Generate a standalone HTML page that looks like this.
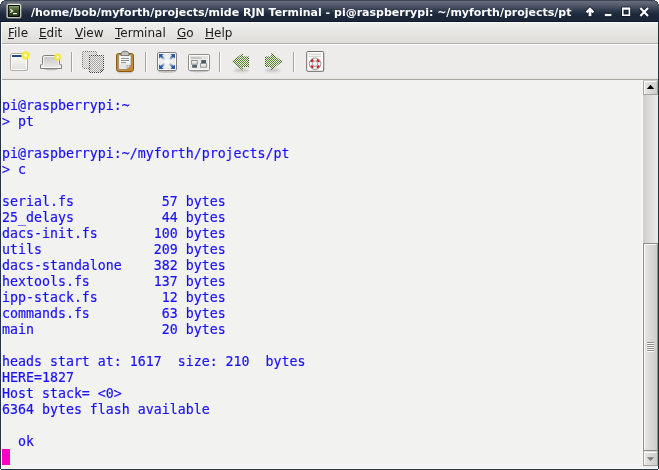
<!DOCTYPE html>
<html><head><meta charset="utf-8">
<style>
html,body{margin:0;padding:0;}
body{width:659px;height:470px;overflow:hidden;background:#fff;position:relative;font-family:"DejaVu Sans","Liberation Sans",sans-serif;}
#win{position:absolute;left:0;top:0;width:659px;height:470px;background:#243247;overflow:hidden;}
#title{position:absolute;left:0;top:0;width:659px;height:22px;background:linear-gradient(#3b4553 0,#3b4553 1px,#646c7b 1px,#5f6776 3px,#525b6b 5px,#454f60 7px,#384355 9px,#2c384b 11px,#222e42 13px,#1c283b 15px,#1b2639 21px,#0f1a2e 21px,#0f1a2e 22px);}
#ttext{position:absolute;left:31px;top:6px;will-change:transform;font-weight:bold;font-size:11px;line-height:14px;color:#fff;white-space:nowrap;letter-spacing:0px}
#client{position:absolute;left:1px;top:22px;width:657px;height:447px;background:#edecea;border-left:1px solid #fbfbfa;border-bottom:1px solid #fbfbfa;box-sizing:border-box}
#menubar{position:absolute;left:0;top:0;width:656px;height:22px;background:linear-gradient(#efefed,#dddcd8);border-top:1px solid #fcfcfb;border-bottom:1px solid #b0aea7;box-sizing:border-box;}
.mi{will-change:transform;position:absolute;top:2px;font-size:12px;line-height:16px;color:#1a1a1a;white-space:nowrap}
.mi u{text-decoration:underline;text-underline-offset:1px}
#toolbar{position:absolute;left:0;top:22px;width:656px;height:35px;background:linear-gradient(#edecea 0,#edecea 32px,#e3e2df 35px);border-top:1px solid #fcfcfb;box-sizing:border-box}
#term{position:absolute;left:0;top:57px;width:641px;height:389px;background:#f2f2f0;border-top:1px solid #a6a49e;border-right:1px solid #fbfbfa;box-sizing:border-box;}
pre{will-change:transform;margin:0;position:absolute;left:0px;top:2px;font-family:"DejaVu Sans Mono","Liberation Mono",monospace;font-size:13.288px;line-height:16px;color:#1a10fa;-webkit-text-stroke:0.18px #1a10fa;}
#cursor{position:absolute;left:0;top:369px;width:8px;height:16px;background:#ff00c8}
#ov{position:absolute;left:0;top:0;width:659px;height:470px;}
</style></head><body>
<div id="win">
<div id="title"><div id="ttext">/home/bob/myforth/projects/mide RJN Terminal - pi@raspberrypi: ~/myforth/projects/pt</div></div>
<div id="client">
<div id="menubar">
<span class="mi" style="left:6px"><u>F</u>ile</span>
<span class="mi" style="left:37px"><u>E</u>dit</span>
<span class="mi" style="left:73px"><u>V</u>iew</span>
<span class="mi" style="left:113px"><u>T</u>erminal</span>
<span class="mi" style="left:175px"><u>G</u>o</span>
<span class="mi" style="left:203px"><u>H</u>elp</span>
</div>
<div id="toolbar"></div>
<div id="term"><pre>

pi@raspberrypi:~
&gt; pt

pi@raspberrypi:~/myforth/projects/pt
&gt; c

serial.fs           57 bytes
25_delays           44 bytes
dacs-init.fs       100 bytes
utils              209 bytes
dacs-standalone    382 bytes
hextools.fs        137 bytes
ipp-stack.fs        12 bytes
commands.fs         63 bytes
main                20 bytes

heads start at: 1617  size: 210  bytes
HERE=1827
Host stack= &lt;0&gt;
6364 bytes flash available

  ok
</pre><div id="cursor"></div></div>
</div>
<svg id="ov" width="659" height="470" viewBox="0 0 659 470">
<defs>
<pattern id="st1" width="2" height="2" patternUnits="userSpaceOnUse"><rect x="0" y="0" width="1" height="1" fill="#fff"/><rect x="1" y="1" width="1" height="1" fill="#fff"/></pattern>
<mask id="stm" maskUnits="userSpaceOnUse" x="0" y="0" width="659" height="470"><rect x="0" y="0" width="659" height="470" fill="url(#st1)" shape-rendering="crispEdges"/></mask>
<linearGradient id="gIcon" x1="0" y1="0" x2="0" y2="1"><stop offset="0" stop-color="#88a46c"/><stop offset="0.2" stop-color="#5f7b45"/><stop offset="0.5" stop-color="#3c5028"/><stop offset="1" stop-color="#243218"/></linearGradient>
<linearGradient id="gFrame" x1="0" y1="0" x2="0" y2="1"><stop offset="0" stop-color="#ecece4"/><stop offset="1" stop-color="#c4c4ba"/></linearGradient>
<linearGradient id="gWin" x1="0" y1="0" x2="0" y2="1"><stop offset="0" stop-color="#ffffff"/><stop offset="1" stop-color="#dededc"/></linearGradient>
<linearGradient id="gTab" x1="0" y1="0" x2="0" y2="1"><stop offset="0" stop-color="#c4c4c2"/><stop offset="1" stop-color="#ebebe9"/></linearGradient>
<radialGradient id="gGlow"><stop offset="0" stop-color="#ffffff"/><stop offset="0.12" stop-color="#ffffff"/><stop offset="0.3" stop-color="#f7f06a"/><stop offset="0.55" stop-color="#f2e832"/><stop offset="0.78" stop-color="#f2e83a" stop-opacity="0.75"/><stop offset="1" stop-color="#f2e83a" stop-opacity="0"/></radialGradient>
<linearGradient id="gTrough" x1="0" y1="0" x2="1" y2="0"><stop offset="0" stop-color="#cfcecb"/><stop offset="1" stop-color="#ecebe9"/></linearGradient>
<linearGradient id="gThumb" x1="0" y1="0" x2="1" y2="0"><stop offset="0" stop-color="#e9e8e6"/><stop offset="1" stop-color="#cccbc8"/></linearGradient>
<linearGradient id="gBtn" x1="0" y1="0" x2="0" y2="1"><stop offset="0" stop-color="#f4f4f2"/><stop offset="1" stop-color="#dddcd9"/></linearGradient>
<radialGradient id="gFs" cx="0.5" cy="0.5" r="0.7"><stop offset="0" stop-color="#fafafa"/><stop offset="1" stop-color="#dcdcda"/></radialGradient>
<linearGradient id="gA1" gradientUnits="userSpaceOnUse" x1="160.600" y1="55.600" x2="165.600" y2="60.600"><stop offset="0.15" stop-color="#2a5aa8"/><stop offset="0.85" stop-color="#2a5aa8" stop-opacity="0"/></linearGradient>
<linearGradient id="gA2" gradientUnits="userSpaceOnUse" x1="173.400" y1="55.600" x2="168.400" y2="60.600"><stop offset="0.15" stop-color="#2a5aa8"/><stop offset="0.85" stop-color="#2a5aa8" stop-opacity="0"/></linearGradient>
<linearGradient id="gA3" gradientUnits="userSpaceOnUse" x1="160.600" y1="67.400" x2="165.600" y2="62.400"><stop offset="0.15" stop-color="#2a5aa8"/><stop offset="0.85" stop-color="#2a5aa8" stop-opacity="0"/></linearGradient>
<linearGradient id="gA4" gradientUnits="userSpaceOnUse" x1="173.400" y1="67.400" x2="168.400" y2="62.400"><stop offset="0.15" stop-color="#2a5aa8"/><stop offset="0.85" stop-color="#2a5aa8" stop-opacity="0"/></linearGradient>
<filter id="blur1" x="-20%" y="-100%" width="140%" height="300%"><feGaussianBlur stdDeviation="0.9"/></filter>
<linearGradient id="gWin2" x1="0" y1="0" x2="0" y2="1"><stop offset="0" stop-color="#ffffff"/><stop offset="1" stop-color="#ecece9"/></linearGradient>
</defs>
<!-- title icon -->
<rect x="6.200" y="3.300" width="15.300" height="15.300" rx="2.600" fill="#9c9c92"/>
<rect x="6.900" y="4" width="13.900" height="13.900" rx="2" fill="url(#gFrame)"/>
<rect x="7.8" y="5" width="12.2" height="12" rx="1" fill="#050805"/>
<rect x="8.8" y="6" width="10.2" height="10" fill="url(#gIcon)"/>
<path d="M10.3 9.2 L12.6 10.9 L10.3 12.6" fill="none" stroke="#fff" stroke-width="1.1"/>
<rect x="13" y="13" width="4" height="1.2" fill="#fff"/>
<!-- title buttons -->
<g fill="none" stroke="#0a1220" opacity="0.75">
<path d="M590 16.100 V9.500" stroke-width="4.6"/>
<path d="M586.500 12.400 L590 8.900 L593.500 12.400" stroke-width="4.0" stroke-linejoin="miter"/>
<path d="M604.800 15 H611.400" stroke-width="4.1"/>
<rect x="622.800" y="8.800" width="6.600" height="6.400" stroke-width="3.4"/>
<path d="M622 8.400 H630.200" stroke-width="3.7"/>
<path d="M640.400 8 L648 15.900 M648 8 L640.400 15.900" stroke-width="4.0"/>
</g>
<g fill="none" stroke="#fff">
<path d="M590 16.100 V9.500" stroke-width="2.8"/>
<path d="M586.500 12.400 L590 8.900 L593.500 12.400" stroke-width="2.2" stroke-linejoin="miter"/>
<path d="M604.800 15 H611.400" stroke-width="2.3"/>
<rect x="622.800" y="8.800" width="6.600" height="6.400" stroke-width="1.6"/>
<path d="M622 8.400 H630.200" stroke-width="1.9"/>
<path d="M640.400 8 L648 15.900 M648 8 L640.400 15.900" stroke-width="2.2"/>
</g>
<!-- toolbar separators -->
<g fill="#a5a49e"><rect x="71" y="52" width="1" height="20"/><rect x="145" y="52" width="1" height="20"/><rect x="219" y="52" width="1" height="20"/><rect x="293" y="52" width="1" height="20"/></g>
<g fill="#fbfbfa"><rect x="72" y="52" width="1" height="20"/><rect x="146" y="52" width="1" height="20"/><rect x="220" y="52" width="1" height="20"/><rect x="294" y="52" width="1" height="20"/></g>
<!-- new window -->
<rect x="10.500" y="53.500" width="17" height="17" rx="1.500" fill="url(#gWin)" stroke="#adada6"/>
<rect x="11.500" y="54.500" width="15" height="15" rx="0.700" fill="none" stroke="#fff" stroke-width="0.900"/>
<rect x="12" y="55" width="10" height="2" fill="#204a87"/>
<circle cx="25.600" cy="55.400" r="5" fill="url(#gGlow)"/>
<!-- new tab -->
<ellipse cx="51" cy="69.500" rx="7" ry="0.800" fill="#8a8a86" opacity="0.500"/>
<path d="M40.500 68.500 V64.800 H41.800 Q42.500 64.800 42.500 63.800 V57.500 Q42.500 55.500 44.500 55.500 H57.500 Q59.500 55.500 59.500 57.500 V63.800 Q59.500 64.800 60.300 64.800 H61.500 V68.500 Z" fill="url(#gTab)" stroke="#807f7b"/>
<path d="M41.500 67.500 V65.800 H42.600 Q43.500 65.800 43.500 64.600 V57.700 Q43.500 56.500 44.700 56.500 H57.300 Q58.500 56.500 58.500 57.700 V64.600 Q58.500 65.800 59.400 65.800 H60.500 V67.500 Z" fill="none" stroke="#fff" stroke-width="0.900" opacity="0.850"/>
<circle cx="57.700" cy="57.100" r="4.300" fill="url(#gGlow)"/>
<!-- copy (disabled, stippled) -->
<g mask="url(#stm)">
<rect x="82.500" y="51.500" width="14" height="17" rx="1.2" fill="#c2c2c0" stroke="#6e6e6c"/>
<path d="M89.500 55.500 H103.500 V69.500 L100.500 72.500 H89.500 Z" fill="#a6a6a4" stroke="#3a3a3a"/>
<path d="M100.500 72 V69.500 H103.500" fill="none" stroke="#5a5a5a"/>
</g>
<!-- paste -->
<ellipse cx="125" cy="72.600" rx="8" ry="0.900" fill="#8a8a86" opacity="0.350"/>
<rect x="116.500" y="53.500" width="17" height="18" rx="2.200" fill="#c78a2c" stroke="#8a5a08"/>
<path d="M118.700 54.700 H131 V65.500 L127 69.300 H118.700 Z" fill="#fbfbfa" stroke="#7e7e7a" stroke-width="0.700"/>
<path d="M120 63.500 H130.300 V65.300 L126.800 68.600 H120 Z" fill="#e4e4e0"/>
<path d="M127 69.200 Q127.600 66.300 126.600 65.600 Q129 66.300 131 65.500 Z" fill="#f6f6f4" stroke="#7e7e7a" stroke-width="0.600"/>
<g stroke="#8c8c8a" stroke-width="1"><path d="M121 58.400 H129"/><path d="M121 60.500 H129"/><path d="M121 62.600 H126"/></g>
<path d="M120.900 55.600 V53.900 Q120.900 53 121.800 52.600 Q122.300 51.300 123.600 51.300 H126.400 Q127.700 51.300 128.200 52.600 Q129.100 53 129.100 53.900 V55.600 Z" fill="#b9bab0" stroke="#5c5e58" stroke-width="0.800"/>
<path d="M122 54 H128" stroke="#d6d6ce" stroke-width="0.900"/>
<!-- fullscreen -->
<ellipse cx="167" cy="71.600" rx="9" ry="1.100" fill="#8a8a86" opacity="0.450"/>
<rect x="157.500" y="52.500" width="19" height="18" rx="1.500" fill="url(#gFs)" stroke="#7e7e7b"/>
<rect x="158.500" y="53.500" width="17" height="16" rx="0.800" fill="none" stroke="#fff" stroke-width="0.800"/>
<g stroke-width="2.300" fill="none">
<path d="M160.600 55.600 L165.600 60.600" stroke="url(#gA1)"/>
<path d="M173.400 55.600 L168.400 60.600" stroke="url(#gA2)"/>
<path d="M160.600 67.400 L165.600 62.400" stroke="url(#gA3)"/>
<path d="M173.400 67.400 L168.400 62.400" stroke="url(#gA4)"/>
</g>
<g fill="#2a5aa8">
<path d="M159 54 H163.600 L159 58.600 Z"/>
<path d="M175 54 H170.400 L175 58.600 Z"/>
<path d="M159 69 H163.600 L159 64.400 Z"/>
<path d="M175 69 H170.400 L175 64.400 Z"/>
</g>
<!-- tabs icon -->
<ellipse cx="199" cy="71.400" rx="9" ry="0.900" fill="#8a8a86" opacity="0.400"/>
<rect x="188.500" y="54.500" width="21" height="16" rx="1.200" fill="#ececea" stroke="#8c8c89"/>
<rect x="189.500" y="55.500" width="19" height="14" rx="0.500" fill="none" stroke="#fcfcfc" stroke-width="0.900"/>
<rect x="190.200" y="56.200" width="17.600" height="3" fill="#e2e2e0"/>
<rect x="190.700" y="57" width="10.500" height="1.800" fill="#c2c2c0"/>
<rect x="191.650" y="60.600" width="5.600" height="3.500" fill="#fff" stroke="#8a8a88" stroke-width="1"/>
<path d="M193.300 62.400 H195.800" stroke="#c8c8c6" stroke-width="0.700"/>
<rect x="192.200" y="64.900" width="4.750" height="2.850" fill="#4e6066"/>
<rect x="201.200" y="60.100" width="4.800" height="2.900" fill="#4a5a60"/>
<rect x="200.650" y="63.600" width="5.700" height="3.500" fill="#fff" stroke="#8a8a88" stroke-width="1"/>
<path d="M202.300 65.400 H204.800" stroke="#c8c8c6" stroke-width="0.700"/>
<!-- back / forward (disabled, stippled) -->
<g filter="url(#blur1)" opacity="0.42"><ellipse cx="241.500" cy="70.300" rx="7.500" ry="1.800" fill="#8e8e8a"/><ellipse cx="272.500" cy="70.300" rx="7.500" ry="1.800" fill="#8e8e8a"/></g>
<g mask="url(#stm)">
<path d="M231.800 61.600 L242.800 52.900 V56.600 H249 V67 H242.800 V70.500 Z" fill="#335a10"/>
<path d="M233.400 61.600 L241.800 55 V57.600 H248 V66 H241.800 V68.400 Z" fill="#568628"/>
<path d="M282.300 61.600 L271.200 52.900 V56.600 H265 V67 H271.200 V70.500 Z" fill="#335a10"/>
<path d="M280.700 61.600 L272.200 55 V57.600 H266 V66 H272.200 V68.400 Z" fill="#568628"/>
</g>
<!-- help -->
<rect x="307.300" y="52.300" width="17" height="19.800" rx="1.2" fill="#8a8a86" opacity="0.35"/>
<rect x="306.700" y="51.500" width="17" height="19.800" rx="1.2" fill="#fdfdfc" stroke="#6e6e6a"/>
<path d="M308.700 54.2 H321 M308.700 56.300 H321" stroke="#c6c6c2" stroke-width="0.9"/>
<circle cx="315.100" cy="63.700" r="4.300" fill="none" stroke="#fbfbfb" stroke-width="3"/>
<g fill="none" stroke="#cf1f28" stroke-width="2.500">
<path d="M316.900 59.780 A4.300 4.300 0 0 1 319.020 61.900"/>
<path d="M319.020 65.500 A4.300 4.300 0 0 1 316.900 67.620"/>
<path d="M313.300 67.620 A4.300 4.300 0 0 1 311.180 65.500"/>
<path d="M311.180 61.900 A4.300 4.300 0 0 1 313.300 59.780"/>
</g>
<circle cx="315.100" cy="63.700" r="5.800" fill="none" stroke="#8a8a86" stroke-width="0.900"/>
<circle cx="315.100" cy="63.700" r="2.700" fill="#f4f4f2" stroke="#8a8a86" stroke-width="0.800"/>
<!-- scrollbar -->
<rect x="643" y="80" width="15" height="389" fill="url(#gTrough)"/>
<rect x="643.500" y="80.500" width="14" height="14" fill="url(#gThumb)" stroke="#a3a19c"/>
<path d="M643 80.500 H658" stroke="#cdcbc6"/>
<path d="M642 79.500 H658" stroke="#a6a49e"/>
<path d="M644.500 93.500 V81.500 H656.500" fill="none" stroke="#fff"/>
<path d="M646.800 89 L650.500 84.800 L654.200 89 Z" fill="#000"/>
<rect x="643.500" y="243.500" width="14" height="207" fill="url(#gThumb)" stroke="#8f8d89"/>
<path d="M644.500 450 V244.500 H656.500" fill="none" stroke="#fbfbfa"/>
<g shape-rendering="crispEdges"><path d="M647 342.500 H654 M647 344.500 H654 M647 346.500 H654 M647 348.500 H654 M647 350.500 H654" stroke="#8f8b87"/><path d="M647 343.500 H654 M647 345.500 H654 M647 347.500 H654 M647 349.500 H654 M647 351.500 H654" stroke="#fff"/></g>
<rect x="643.500" y="450.500" width="14" height="15" fill="url(#gThumb)" stroke="#a3a19c"/>
<path d="M643 450.500 H658" stroke="#8f8d89"/>
<path d="M644.500 464.500 V452.500 H656.500" fill="none" stroke="#fff"/>
<path d="M646.900 457.300 L650.500 461 L654.100 457.300 Z" fill="#7c7b78"/>
<rect x="643" y="466" width="15" height="3" fill="#eeedeb"/>
<rect x="2" y="468" width="656" height="1" fill="#fbfbfa"/>
<rect x="0" y="469" width="1" height="1" fill="#fff"/><rect x="658" y="469" width="1" height="1" fill="#fff"/>
<!-- top-left / top-right corner cutouts -->
<g fill="#fff" shape-rendering="crispEdges"><rect x="0" y="0" width="4" height="1"/><rect x="0" y="1" width="2" height="1"/><rect x="0" y="2" width="1" height="2"/>
<rect x="655" y="0" width="4" height="1"/><rect x="657" y="1" width="2" height="1"/><rect x="658" y="2" width="1" height="2"/></g>
<g fill="#3a4656" shape-rendering="crispEdges"><rect x="4" y="0" width="2" height="1"/><rect x="2" y="1" width="2" height="1"/><rect x="1" y="2" width="1" height="2"/><rect x="0" y="4" width="1" height="2"/>
<rect x="653" y="0" width="2" height="1"/><rect x="655" y="1" width="2" height="1"/><rect x="657" y="2" width="1" height="2"/><rect x="658" y="4" width="1" height="2"/></g>
</svg>
</div>
</body></html>
